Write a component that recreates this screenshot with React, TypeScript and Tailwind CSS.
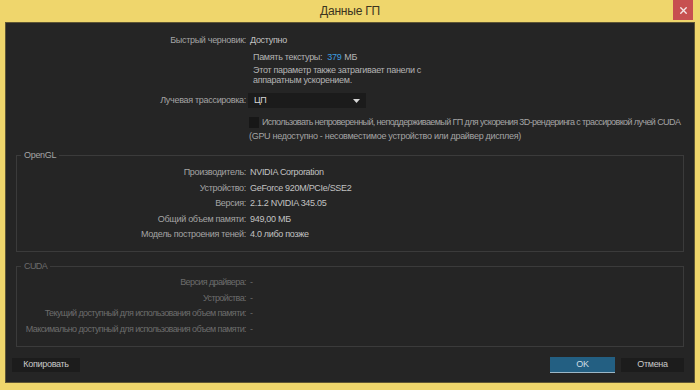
import { X } from 'lucide-react';

const font = 'font-["Liberation_Sans","DejaVu_Sans",sans-serif]';

function Row({ label, value, dim }: { label: string; value: string; dim?: boolean }) {
  return (
    <div className="flex h-[15.6px] items-center whitespace-nowrap">
      <div className={`w-[229px] flex justify-end ${dim ? 'text-[#6c6c6c]' : 'text-[#a4a4a4]'}`}>
        <span>{label}</span>
      </div>
      <span className={`ml-[4px] ${dim ? 'text-[#6c6c6c]' : 'text-[#c2c2c2]'}`}>{value}</span>
    </div>
  );
}

export default function App() {
  return (
    <div className={`w-[700px] h-[390px] bg-[#efd66c] flex flex-col text-[9px] tracking-[-0.3px] ${font}`}>
      {/* title bar */}
      <div className="relative h-[22px] shrink-0 flex items-center justify-center">
        <span className="text-[12px] tracking-[-0.2px] text-[#3b3420]">Данные ГП</span>
        <button className="absolute right-[7px] top-0 w-[20px] h-[20px] bg-[#c75050] flex items-center justify-center">
          <X size={11} strokeWidth={3} className="text-[#f4e6e6]" />
        </button>
      </div>

      {/* body */}
      <div className="mx-[5px] h-[361px] bg-[#252525] border border-[#5f5634] flex flex-col">
        <div className="pt-[12px]">
          <div className="flex h-[12px] items-center">
            <span className="w-[240px] text-right text-[#a4a4a4]">Быстрый черновик:</span>
            <span className="ml-[4px] text-[#c2c2c2]">Доступно</span>
          </div>
          <div className="ml-[247px] mt-[5px] text-[#b4b4b4]">
            <div className="h-[12px] flex items-center">
              Память текстуры:<span className="ml-[5px] text-[#3d9ee0]">379</span>
              <span className="ml-[3px]">МБ</span>
            </div>
            <div className="mt-[1px] leading-[10px]">
              Этот параметр также затрагивает панели с
              <br />
              аппаратным ускорением.
            </div>
          </div>
          <div className="flex items-center mt-[8px] h-[15px]">
            <span className="w-[240px] text-right text-[#a4a4a4]">Лучевая трассировка:</span>
            <div className="ml-[2px] w-[118px] h-[15px] bg-[#1b1b1b] flex items-center justify-between pl-[6px] pr-[6px]">
              <span className="text-[#d6d6d6]">ЦП</span>
              <svg width="7" height="4" viewBox="0 0 7 4">
                <path d="M0 0H7L3.5 4Z" fill="#d6d6d6" />
              </svg>
            </div>
          </div>
          <div className="flex items-center mt-[9px] ml-[243px] h-[11px] whitespace-nowrap">
            <span className="w-[10px] h-[11px] shrink-0 bg-[#171717]" />
            <span className="ml-[3px] text-[#a4a4a4] tracking-[-0.6px]">
              Использовать непроверенный, неподдерживаемый ГП для ускорения 3D-рендеринга с трассировкой лучей CUDA
            </span>
          </div>
          <div className="ml-[243px] mt-[3px] h-[12px] flex items-center text-[#a4a4a4] whitespace-nowrap">
            (GPU недоступно - несовместимое устройство или драйвер дисплея)
          </div>
        </div>

        <fieldset className="mx-[10px] mt-[7px] h-[102px] border border-[#3b3b3b] px-0 pt-[5px]">
          <legend className="ml-[4px] px-[3px] text-[#a4a4a4] leading-[10px]">OpenGL</legend>
          <Row label="Производитель:" value="NVIDIA Corporation" />
          <Row label="Устройство:" value="GeForce 920M/PCIe/SSE2" />
          <Row label="Версия:" value="2.1.2 NVIDIA 345.05" />
          <Row label="Общий объем памяти:" value="949,00 МБ" />
          <Row label="Модель построения теней:" value="4.0 либо позже" />
        </fieldset>

        <fieldset className="mx-[10px] mt-[9px] h-[86px] border border-[#3b3b3b] px-0 pt-[4px] tracking-[-0.6px]">
          <legend className="ml-[4px] px-[3px] text-[#6c6c6c] leading-[10px]">CUDA</legend>
          <Row dim label="Версия драйвера:" value="-" />
          <Row dim label="Устройства:" value="-" />
          <Row dim label="Текущий доступный для использования объем памяти:" value="-" />
          <Row dim label="Максимально доступный для использования объем памяти:" value="-" />
        </fieldset>

        <div className="mt-auto mb-[9px] flex items-center pl-[6px] pr-[10px]">
          <button className="w-[68px] h-[14px] bg-[#1c1c1c] text-[#c8c8c8] flex items-center justify-center">
            Копировать
          </button>
          <button className="ml-auto w-[65px] h-[16px] bg-[#235f82] border-b border-[#9cb7c6] text-[#d0dde4] flex items-center justify-center">
            OK
          </button>
          <button className="ml-[6px] w-[63px] h-[14px] bg-[#1c1c1c] text-[#c8c8c8] flex items-center justify-center">
            Отмена
          </button>
        </div>
      </div>
    </div>
  );
}
